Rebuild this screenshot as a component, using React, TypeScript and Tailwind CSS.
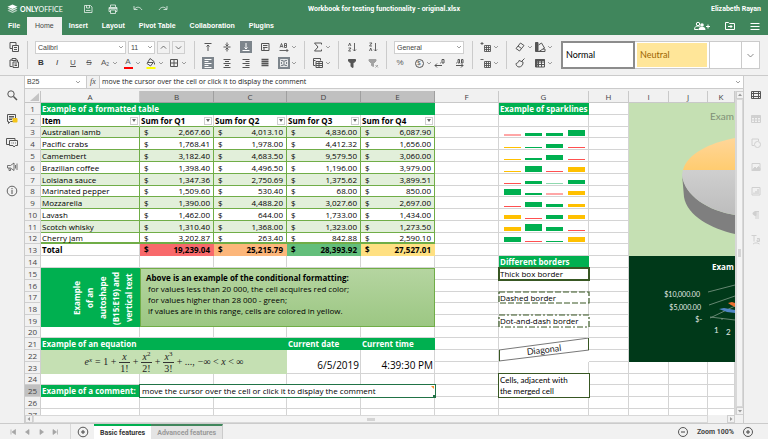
import React from "react";

type Kids = { children?: React.ReactNode };

const ui = "font-['Liberation_Sans',Arial,sans-serif]";

/* ---------- small building blocks ---------- */

function Icon({ children, className = "size-3", box = "0 0 12 12" }: Kids & { className?: string; box?: string }) {
  return (
    <svg viewBox={box} className={className} fill="none" stroke="currentColor" strokeWidth="1" aria-hidden="true">
      {children}
    </svg>
  );
}

function Chevron() {
  return (
    <svg viewBox="0 0 6 6" className="size-[6px] shrink-0" fill="none" stroke="#888" strokeWidth="0.8" aria-hidden="true">
      <path d="M1 2l2 2 2-2" />
    </svg>
  );
}

function Tool({ label, children, active = false, menu = false }: Kids & { label: string; active?: boolean; menu?: boolean }) {
  return (
    <button type="button" aria-label={label} className="flex h-3 shrink-0 items-center gap-px">
      <span className={`flex size-3 items-center justify-center ${active ? "bg-[#7d858c] text-white" : "text-[#555]"}`}>{children}</span>
      {menu && <Chevron />}
    </button>
  );
}

function Group({ children }: Kids) {
  return <div className="flex flex-col gap-1">{children}</div>;
}

function Line({ children, wide = false }: Kids & { wide?: boolean }) {
  return <div className={`flex h-3 items-center ${wide ? "gap-[7px]" : "gap-1"}`}>{children}</div>;
}

function Divider() {
  return <div className="w-px self-stretch bg-[#cbcbcb]" />;
}

function Picker({ label, value, className }: { label: string; value: string; className: string }) {
  return (
    <div className={`relative flex h-[13px] items-center border border-[#cfcfcf] bg-white ${className}`}>
      <select
        aria-label={label}
        className="h-full w-full appearance-none pl-[2px] text-[7px] leading-[11px] text-[#444] outline-none"
        defaultValue={value}
      >
        <option>{value}</option>
      </select>
      <span className="pointer-events-none absolute right-px">
        <Chevron />
      </span>
    </div>
  );
}

/* ---------- title bar and tabs ---------- */

const tabs = ["File", "Home", "Insert", "Layout", "Pivot Table", "Collaboration", "Plugins"];

function Header() {
  return (
    <header className="bg-[#40865c] text-white">
      <div className="grid h-[17px] grid-cols-[1fr_auto_1fr] items-center px-[7px]">
        <div className="flex items-center">
          <svg viewBox="0 0 11 10" className="mr-[2px] h-[10px] w-[11px]" fill="#fff" aria-hidden="true">
            <path d="M5.500 0.500L10.500 2.800 5.500 5 0.500 2.800z" />
            <path d="M0.500 4.500l1.500-.6 3.500 1.600L9 3.900l1.500.6-5 2.400z" opacity=".85" />
            <path d="M0.500 6.700l1.500-.6 3.500 1.600L9 6.100l1.500.6-5 2.400z" opacity=".65" />
          </svg>
          <span className="w-[62px] font-[Lato,sans-serif] text-[7px] leading-[10px]">
            <b>ONLY</b>OFFICE
          </span>
          <div className="flex items-center gap-[13px] text-white/70">
            <button type="button" aria-label="Save">
              <Icon>
                <path d="M2.500 2.500h6l1.500 1.500v5.500h-7.500zM4.500 2.500v2.500h3v-2.500M4 7.500h4.500" />
              </Icon>
            </button>
            <button type="button" aria-label="Print">
              <Icon>
                <path d="M3.500 4v-2h5v2M3.500 8.500h-1.500v-4h8v4h-1.500M3.500 7h5v3.500h-5z" />
                <path d="M2 5.500h8" strokeWidth="1.500" />
              </Icon>
            </button>
            <button type="button" aria-label="Undo">
              <Icon>
                <path d="M2 3v3.500h3.500M2.500 6c2-2.500 5.500-2.500 7.500 1" />
              </Icon>
            </button>
            <button type="button" aria-label="Redo">
              <Icon>
                <path d="M10 3v3.500h-3.500M9.500 6c-2-2.500-5.500-2.500-7.500 1" />
              </Icon>
            </button>
          </div>
        </div>
        <h1 className="font-[Roboto,sans-serif] text-[7px] leading-[10px] font-bold">Workbook for testing functionality - original.xlsx</h1>
        <div className="text-right font-[Roboto,sans-serif] text-[7px] leading-[10px] font-bold">Elizabeth Rayan</div>
      </div>
      <div className="flex h-[18px] items-stretch">
        <nav className="flex pl-px">
          {tabs.map((t) => (
            <button
              key={t}
              type="button"
              className={`text-[7px] leading-[10px] ${t === "Home" ? "bg-[#f1f1f1] px-[8px] text-[#444]" : "px-[7px] font-bold"}`}
            >
              {t}
            </button>
          ))}
        </nav>
        <div className="ml-auto flex items-center gap-[13px] pr-[7px]">
          <button type="button" aria-label="Share">
            <Icon box="0 0 18 12" className="h-3 w-[18px]">
              <circle cx="5" cy="4" r="1.700" />
              <path d="M1.500 9.500c0-3 2-3.500 3.500-3.500s2 .3 2.500 1M1.500 9.500h4" />
              <circle cx="9" cy="5" r="1.800" fill="currentColor" stroke="none" />
              <path d="M5.500 10c0-2.500 1.500-3 3.500-3s3.500.5 3.500 3z" fill="currentColor" stroke="none" />
              <path d="M15 4.500v4M13 6.500h4" />
            </Icon>
          </button>
          <button type="button" aria-label="Open folder">
            <Icon>
              <path d="M1.500 2.500h3l1 1h5v6h-9zM4 6.500h4M6.500 5l1.500 1.500-1.500 1.500" />
            </Icon>
          </button>
          <button type="button" aria-label="Settings">
            <Icon>
              <path d="M1.500 3.500h9M1.500 6.500h9M1.500 9.500h9" />
            </Icon>
          </button>
        </div>
      </div>
    </header>
  );
}

/* ---------- toolbar ---------- */

const grid = "M2.500 2.500h7v7h-7zM6 2.500v7M2.500 6h7";

function Toolbar() {
  return (
    <div className="flex items-center gap-[7px] border-b border-[#cbcbcb] bg-[#f1f1f1] px-2 py-[6px]">
      <Group>
        <Tool label="Copy">
          <Icon>
            <path d="M2 1.500h6v6h-6z" />
            <path d="M4.500 4.500h6v6h-6zM6 6.500h3M6 8.500h3" fill="#f1f1f1" />
          </Icon>
        </Tool>
        <Tool label="Paste">
          <Icon>
            <path d="M4 3h-2v6.500h2.500M8 3h1.500v2M4 1.500h4v2h-4z" />
            <path d="M5 5h5.500v5.500h-5.500zM6.500 7h2.500M6.500 8.500h2.500" />
          </Icon>
        </Tool>
      </Group>
      <Divider />
      <Group>
        <div className="flex h-3 items-center gap-[2px]">
          <Picker label="Font" value="Calibri" className="w-[91px]" />
          <Picker label="Font size" value="11" className="w-[27px]" />
          <button type="button" aria-label="Increase font size" className="flex h-[13px] w-[13px] items-center justify-center border border-[#cfcfcf]">
            <Icon className="size-[9px] text-[#444]">
              <path d="M2.500 7.500l3.500-3.500 3.500 3.500" />
            </Icon>
          </button>
          <button type="button" aria-label="Decrease font size" className="flex h-[13px] w-[13px] items-center justify-center border border-[#cfcfcf]">
            <Icon className="size-[9px] text-[#444]">
              <path d="M2.500 4.500l3.500 3.500 3.500-3.500" />
            </Icon>
          </button>
        </div>
        <Line>
          <Tool label="Bold">
            <b className="text-[8px] leading-3 text-[#333]">B</b>
          </Tool>
          <Tool label="Italic">
            <i className="text-[8px] leading-3 text-[#333]">I</i>
          </Tool>
          <Tool label="Underline">
            <u className="text-[8px] leading-3">U</u>
          </Tool>
          <Tool label="Strikeout">
            <s className="text-[8px] leading-3">S</s>
          </Tool>
          <Tool label="Subscript" menu>
            <span className="text-[8px] leading-3">
              A<sub className="text-[5px]">2</sub>
            </span>
          </Tool>
          <Tool label="Font color" menu>
            <span className="flex h-3 w-[9px] items-start justify-center border-b-2 border-[#f00] text-[8px] leading-[10px]">A</span>
          </Tool>
          <Tool label="Fill color" menu>
            <Icon>
              <path d="M5 1.500l4 3-3.500 4.500-3.500-2.500zM3 5.500h5M9.500 5.500v2" />
              <path d="M1.500 11h9" stroke="#ff0" strokeWidth="2" />
            </Icon>
          </Tool>
          <Tool label="Borders" menu>
            <Icon>
              <path d={grid} />
            </Icon>
          </Tool>
        </Line>
      </Group>
      <Divider />
      <Group>
        <Line wide>
          <Tool label="Align top">
            <Icon>
              <path d="M2.500 2.500h7M6 10v-6M4.500 5.500l1.500-1.500 1.500 1.500" />
            </Icon>
          </Tool>
          <Tool label="Align middle">
            <Icon>
              <path d="M2.500 6h7M6 1.500v3.500M6 10.500v-3.500M4.500 3.500l1.500 1.500 1.500-1.500M4.500 8.500l1.500-1.500 1.500 1.500" />
            </Icon>
          </Tool>
          <Tool label="Align bottom" active>
            <Icon>
              <path d="M2.500 9.500h7M6 2v6M4.500 6.500l1.500 1.500 1.500-1.500" />
            </Icon>
          </Tool>
          <Tool label="Wrap text">
            <Icon>
              <path d="M2.500 2.500h7.500v7h-7.500zM4 4.500h4.500M4 6.500h4.500M4 8h2" />
            </Icon>
          </Tool>
          <Tool label="Orientation" menu>
            <Icon>
              <path d="M1.500 9.500h8.500M8.500 8l1.500 1.500-1.500 1.500M2 6.500l1.500-4 1.500 4M2.500 5.500h2M6.500 2.500v4h2v-4zM6.500 4.500h2" strokeWidth="0.900" />
            </Icon>
          </Tool>
        </Line>
        <Line wide>
          <Tool label="Align left" active>
            <Icon>
              <path d="M2.500 2.500h7M2.500 4.500h4M2.500 6.500h7M2.500 8.500h4M2.500 10.500h7" />
            </Icon>
          </Tool>
          <Tool label="Align center">
            <Icon>
              <path d="M2.500 2.500h7M4 4.500h4M2.500 6.500h7M4 8.500h4M2.500 10.500h7" />
            </Icon>
          </Tool>
          <Tool label="Align right">
            <Icon>
              <path d="M2.500 2.500h7M5.500 4.500h4M2.500 6.500h7M5.500 8.500h4M2.500 10.500h7" />
            </Icon>
          </Tool>
          <Tool label="Justified">
            <Icon>
              <path d="M2.500 2.500h7M2.500 4.500h7M2.500 6.500h7M2.500 8.500h7" strokeWidth="1.300" />
            </Icon>
          </Tool>
          <Tool label="Merge cells" active menu>
            <Icon>
              <path d="M2.500 2.500h7v7h-7zM2.500 4.500h2v3h-2M9.500 4.500h-2v3h2M6 2.500v2M6 7.500v2M4.500 6h3" strokeWidth="0.800" />
            </Icon>
          </Tool>
        </Line>
      </Group>
      <Divider />
      <Group>
        <Tool label="Summation" menu>
          <Icon>
            <path d="M9.500 3.500v-1.500h-7l3.500 4-3.500 4h7v-1.500" />
          </Icon>
        </Tool>
        <Tool label="Named ranges" menu>
          <Icon>
            <path d="M8.500 3.500v-2h-7v7h2M1.500 3.500h2" />
            <path d="M4 4.500h6.500v6h-6.500zM4 6.500h6.500M4 8.500h6.500M7 4.500v6" />
          </Icon>
        </Tool>
      </Group>
      <Divider />
      <Group>
        <div className="flex h-3 items-center gap-[9px]">
          <Tool label="Sort ascending">
            <Icon>
              <path d="M8.500 2v8M7 8.500l1.500 1.500 1.500-1.500M2.500 5l1.200-3 1.200 3M2.500 7h2.500l-2.500 3h2.500" strokeWidth="0.900" />
            </Icon>
          </Tool>
          <Tool label="Sort descending">
            <Icon>
              <path d="M8.500 2v8M7 8.500l1.500 1.500 1.500-1.500M2.500 2h2.500l-2.500 3h2.500M2.500 10l1.200-3 1.200 3" strokeWidth="0.900" />
            </Icon>
          </Tool>
        </div>
        <div className="flex h-3 items-center gap-[9px]">
          <Tool label="Filter">
            <Icon>
              <path d="M2.500 2.500h7v1.500l-2.500 2.500v4l-2-1v-3l-2.500-2.500z" fill="currentColor" />
            </Icon>
          </Tool>
          <Tool label="Clear filter">
            <span className="opacity-50">
              <Icon>
                <path d="M2 2.500h7v1.500l-2.500 2.500v3l-2-1v-2l-2.500-2.500z" fill="currentColor" />
                <path d="M8.500 8l2.500 2.500M11 8l-2.500 2.500" />
              </Icon>
            </span>
          </Tool>
        </div>
      </Group>
      <Divider />
      <Group>
        <div className="flex h-3 items-center">
          <Picker label="Number format" value="General" className="w-[70px]" />
        </div>
        <Line wide>
          <Tool label="Percent style">
            <span className="text-[8px] leading-3">%</span>
          </Tool>
          <Tool label="Accounting style" menu>
            <span className="flex size-[9px] items-center justify-center rounded-full border border-[#555] text-[6px] leading-[7px]">$</span>
          </Tool>
          <div className="-ml-[5px] flex gap-[7px]">
            <Tool label="Decrease decimal">
              <Icon>
                <path d="M1 8.500h7M3 6.500l-2 2 2 2M8 2.500h2v3.500h-2zM6 6h.8" />
              </Icon>
            </Tool>
            <Tool label="Increase decimal">
              <Icon>
                <path d="M3 8.500h7M8 6.500l2 2-2 2M5 2.500h1.500v3.500h-1.500zM8.500 2.500h1.500v3.500h-1.500zM3 6h.8" />
              </Icon>
            </Tool>
          </div>
        </Line>
      </Group>
      <Divider />
      <Group>
        <Tool label="Insert cells" menu>
          <Icon>
            <path d="M4.500 4.500h6v6h-6zM4.500 6.500h6M4.500 8.500h6M6.500 4.500v6M8.500 4.500v6M0.500 2.500h3M2 1v3" strokeWidth="0.900" />
          </Icon>
        </Tool>
        <Tool label="Delete cells" menu>
          <Icon>
            <path d="M4.500 4.500h6v6h-6zM4.500 6.500h6M4.500 8.500h6M6.500 4.500v6M8.500 4.500v6M0.500 2.500h3" strokeWidth="0.900" />
          </Icon>
        </Tool>
      </Group>
      <Divider />
      <Group>
        <div className="flex h-3 items-center gap-px">
          <Tool label="Clear" menu>
            <Icon>
              <path d="M6.500 2l3.500 2.500-4.500 5.500-3.500-2.500zM4 5l3.500 2.500" />
            </Icon>
          </Tool>
          <Tool label="Color scheme" menu>
            <Icon>
              <path d="M1.500 1.500h2.500v9h-2.500z" fill="currentColor" />
              <path d="M4.500 4l3-2 3 5-5.500 3.500M4 10.500h7v-2.500h-2" />
            </Icon>
          </Tool>
        </div>
        <div className="flex h-3 items-center gap-2">
          <Tool label="Copy style">
            <Icon>
              <path d="M10.500 1.500l-3 3M5 3.500l4 1.500c.5 3-2 5-4 5-2 0-3-2-3-3.500 1 0 2.500-1 3-3z" />
            </Icon>
          </Tool>
          <Tool label="Format as table" menu>
            <Icon>
              <path d="M1.500 2.500h9v7.500h-9zM1.500 5h9M1.500 7.500h9M4.500 2.500v7.500M7.500 2.500v7.500" />
              <path d="M1.500 3h9M2.500 3v7" strokeWidth="2" />
            </Icon>
          </Tool>
        </div>
      </Group>
      <div className="ml-px flex min-w-0 flex-1 self-stretch border border-[#cbcbcb] bg-white font-[Lato,sans-serif] text-[9px] leading-3">
        <button type="button" className="-m-px w-[74px] border-2 border-[#8c8c8c] pl-[3px] text-left text-black">
          Normal
        </button>
        <button type="button" className="m-px ml-[3px] w-[70px] bg-[#ffe699] pl-[3px] text-left text-[#9c6500]">
          Neutral
        </button>
        <div className="ml-px flex-1 border-l border-[#cbcbcb]" />
        <button type="button" aria-label="More styles" className="flex w-[18px] items-center justify-center border-l border-[#cbcbcb] text-[#666]">
          <Icon className="size-[9px]">
            <path d="M2 4l4 4 4-4" />
          </Icon>
        </button>
      </div>
    </div>
  );
}

/* ---------- formula bar ---------- */

function FormulaBar() {
  return (
    <div className="flex h-[13px] items-stretch border-b border-[#cbcbcb] bg-white text-[7px] leading-[12px] text-[#444]">
      <div className="flex w-[61px] items-center">
        <input aria-label="Cell name" className="w-[50px] pl-[2px] outline-none" defaultValue="B25" />
        <Chevron />
      </div>
      <button
        type="button"
        aria-label="Insert function"
        className="w-[14px] border-x border-[#cbcbcb] bg-[#f1f1f1] font-['Liberation_Serif',serif] text-[8px] italic"
      >
        fx
      </button>
      <input
        aria-label="Formula"
        className="min-w-0 flex-1 pl-[2px] font-['Open_Sans',sans-serif] text-[#222] outline-none"
        defaultValue="move the cursor over the cell or click it to display the comment"
      />
      <span className="flex items-center pr-[2px]">
        <Chevron />
      </span>
    </div>
  );
}

/* ---------- sheet data ---------- */

const items: [string, string[]][] = [
  ["Australian lamb", ["2,667.60", "4,013.10", "4,836.00", "6,087.90"]],
  ["Pacific crabs", ["1,768.41", "1,978.00", "4,412.32", "1,656.00"]],
  ["Camembert", ["3,182.40", "4,683.50", "9,579.50", "3,060.00"]],
  ["Brazilian coffee", ["1,398.40", "4,496.50", "1,196.00", "3,979.00"]],
  ["Loisiana sauce", ["1,347.36", "2,750.69", "1,375.62", "3,899.51"]],
  ["Marinated pepper", ["1,509.60", "530.40", "68.00", "850.00"]],
  ["Mozzarella", ["1,390.00", "4,488.20", "3,027.60", "2,697.00"]],
  ["Lavash", ["1,462.00", "644.00", "1,733.00", "1,434.00"]],
  ["Scotch whisky", ["1,310.40", "1,368.00", "1,323.00", "1,273.50"]],
  ["Cherry jam", ["3,202.87", "263.40", "842.88", "2,590.10"]],
];

const totals: [string, string][] = [
  ["19,239.04", "bg-[#f8696b]"],
  ["25,215.79", "bg-[#fcb67a]"],
  ["28,393.92", "bg-[#63be7b]"],
  ["27,527.01", "bg-[#ffe082]"],
];

const G = "#00b050";
const Y = "#ffc000";
const R = "#ff5050";
const sparks: [number, string][][] = [
  [[2, "#ffa6a6"], [3, G], [3, G], [6, G]],
  [[1, Y], [1, G], [4, G], [1, R]],
  [[1, Y], [2, G], [5, G], [1, R]],
  [[1, Y], [6, G], [1, R], [5, Y]],
  [[1, R], [3, G], [1, "#8fd9ae"], [4, G]],
  [[6, G], [2, G], [2, "#ffa6a6"], [4, Y]],
  [[1, R], [5, G], [3, G], [3, Y]],
  [[4, Y], [1, R], [4, G], [4, Y]],
  [[4, Y], [7, G], [4, G], [1, R]],
  [[5, G], [1, R], [1, G], [5, Y]],
];

function Sparkline({ bars }: { bars: [number, string][] }) {
  return (
    <svg viewBox="0 0 89 10" className="block h-[10px] w-[89px]" shapeRendering="crispEdges" aria-hidden="true">
      {bars.map(([h, c], i) => (
        <rect key={i} x={[5, 26, 47, 69][i]} y={9 - h} width="17" height={h} fill={c} />
      ))}
    </svg>
  );
}

function PieChart() {
  return (
    <svg viewBox="0 0 106 152" className="block h-[152px] w-[106px]" role="img" aria-label="Pie chart">
      <defs>
        <linearGradient id="amber" x1="0" y1="0" x2="0" y2="1">
          <stop offset="0" stopColor="#ffd699" />
          <stop offset="1" stopColor="#ffcc70" />
        </linearGradient>
        <linearGradient id="silver" x1="0" y1="0" x2="0" y2="1">
          <stop offset="0" stopColor="#cfcfcf" />
          <stop offset="1" stopColor="#bdbdbd" />
        </linearGradient>
      </defs>
      <text x="81" y="17" className="font-[Lato,sans-serif] text-[10px]" fill="#7f8f77">
        Exam
      </text>
      <path d="M54 67C58 51 80 40 106 35V67z" fill="url(#amber)" />
      <path d="M53 71C55 93 80 108 106 112V131C83 126 58 113 55 94z" fill="#7f7f7f" />
      <path d="M54 67H106V112C80 108 55 93 53 72z" fill="url(#silver)" />
    </svg>
  );
}

function LineChart() {
  return (
    <svg viewBox="0 0 106 105" className="block h-[105px] w-[106px]" role="img" aria-label="Line chart">
      <g className="font-[Lato,sans-serif]" fill="#e6ece8">
        <text x="83" y="14" className="font-['Open_Sans',sans-serif] text-[8px] font-bold" fill="#fff">
          Exam
        </text>
        <g className="text-[7px]" textAnchor="end">
          <text x="71" y="41">$10,000.00</text>
          <text x="72" y="54">$5,000.00</text>
          <text x="73" y="66">$-</text>
        </g>
        <g className="text-[8px]">
          <text x="85" y="77">1</text>
          <text x="97" y="79">2</text>
        </g>
      </g>
      <path d="M79 36L106 29M80 49L106 40M81 62L106 50M81 61L106 64M93 62v2" stroke="#7f9a88" strokeWidth="0.800" />
      <path d="M90 53l5-1 11 2v3l-8-1z" fill="#4f86c6" />
      <path d="M99 47l4-1 3 1v4l-4-2z" fill="#ed7031" />
    </svg>
  );
}

function Frac({ top, sup, bottom }: { top: string; sup?: string; bottom: string }) {
  return (
    <span className="flex flex-col items-center">
      <span className="h-[10px] px-px leading-[10px] italic">
        {top}
        {sup && <sup className="-top-[4px] text-[7px] not-italic">{sup}</sup>}
      </span>
      <span className="h-[11px] border-t border-[#333] px-px leading-[11px]">{bottom}</span>
    </span>
  );
}

function Equation() {
  return (
    <div className="flex h-[22px] items-center justify-center gap-[3px] font-['Liberation_Serif',serif] text-[10px] text-[#222]">
      <span className="italic">
        e<sup className="text-[7px]">x</sup>
      </span>
      <span>= 1 +</span>
      <Frac top="x" bottom="1!" />
      <span>+</span>
      <Frac top="x" sup="2" bottom="2!" />
      <span>+</span>
      <Frac top="x" sup="3" bottom="3!" />
      <span>+ ...,</span>
      <span>
        −∞ &lt; <i>x</i> &lt; ∞
      </span>
    </div>
  );
}

/* ---------- sheet ---------- */

const line = "border-r border-b border-[#d4d4d4]";
const title = "bg-[#00b050] pl-px text-left font-bold text-white";
const shortRows = [3, 8, 12, 17, 20, 24];

function Blank({ n = 1 }: { n?: number }) {
  return (
    <>
      {Array.from({ length: n }, (_, i) => (
        <td key={i} className={line} />
      ))}
    </>
  );
}

function leftCells(r: number) {
  if (r === 1)
    return (
      <th colSpan={5} className={title}>
        Example of a formatted table
      </th>
    );
  if (r === 2)
    return ["Item", "Sum for Q1", "Sum for Q2", "Sum for Q3", "Sum for Q4"].map((h) => (
      <th key={h} className="border-r border-b border-r-[#d4d4d4] border-b-[#70ad47] pl-px text-left font-bold">
        <span className="flex items-center justify-between">
          {h}
          <button type="button" aria-label={`Filter ${h}`} className="mr-px flex size-[8px] items-center justify-center border border-[#cfcfcf] bg-white">
            <svg viewBox="0 0 4 3" className="h-[3px] w-[4px]" fill="#666" aria-hidden="true">
              <path d="M0 0h4l-2 3z" />
            </svg>
          </button>
        </span>
      </th>
    ));
  if (r >= 3 && r <= 12) {
    const [name, values] = items[r - 3];
    const cell = `border-r border-b border-[#70ad47] ${r % 2 ? "bg-[#e2efda]" : "bg-white"} ${r === 12 ? "shadow-[inset_0_-1px_0_#70ad47]" : ""}`;
    return (
      <>
        <td className={`${cell} pl-px`}>{name}</td>
        {values.map((v, i) => (
          <td key={i} className={`${cell} pr-[3px] pl-[4px]`}>
            <span className="flex justify-between">
              <span>$</span>
              <span>{v}</span>
            </span>
          </td>
        ))}
      </>
    );
  }
  if (r === 13)
    return (
      <>
        <th className={`${line} pl-px text-left font-bold`}>Total</th>
        {totals.map(([v, c]) => (
          <td key={v} className={`px-[4px] font-bold ${c}`}>
            <span className="flex justify-between">
              <span>$</span>
              <span>{v}</span>
            </span>
          </td>
        ))}
      </>
    );
  if (r === 15)
    return (
      <>
        <td rowSpan={5} className="bg-[#00b050] font-bold text-white">
          <div className="ml-auto mr-[3px] h-[58px] w-[67px] rotate-180 text-center leading-[13px] [writing-mode:vertical-rl]">
            Example
            <br />
            of an
            <br />
            autoshape
            <br />
            (B15:E19) and
            <br />
            vertical text
          </div>
        </td>
        <td rowSpan={5} colSpan={4} className="border border-[#70ad47] bg-linear-to-b from-[#b5d5a0] to-[#9cc783] pt-[3px] pl-[5px] align-top leading-[11px]">
          <b>Above is an example of the conditional formatting:</b>
          <div className="pl-[2px]">
            <p>for values less than 20 000, the cell acquires red color;</p>
            <p>for values higher than 28 000 - green;</p>
            <p>if values are in this range, cells are colored in yellow.</p>
          </div>
        </td>
      </>
    );
  if (r > 15 && r < 20) return null;
  if (r === 21)
    return (
      <>
        <th colSpan={3} className={title}>
          Example of an equation
        </th>
        <th className={title}>Current date</th>
        <th className={title}>Current time</th>
      </>
    );
  if (r === 22)
    return (
      <>
        <td rowSpan={2} colSpan={3} className="bg-[#c5e0b3]">
          <Equation />
        </td>
        {["6/5/2019", "4:39:30 PM"].map((v) => (
          <td key={v} rowSpan={2} className={`${line} pr-px text-right align-bottom text-[10px] leading-[15px]`}>
            {v}
          </td>
        ))}
      </>
    );
  if (r === 23) return null;
  if (r === 25)
    return (
      <>
        <th className={title}>Example of a comment:</th>
        <td colSpan={4} className="relative bg-white pl-[2px] outline outline-[#217346]">
          move the cursor over the cell or click it to display the comment
          <span className="absolute top-px right-px size-0 border-t-3 border-l-3 border-t-[#f28c28] border-l-transparent" />
          <span className="absolute -right-px -bottom-px size-[3px] bg-[#217346]" />
        </td>
      </>
    );
  return <Blank n={5} />;
}

function gCell(r: number) {
  if (r === 1) return <th className={title}>Example of sparklines</th>;
  if (r >= 3 && r <= 12)
    return (
      <td className={line}>
        <Sparkline bars={sparks[r - 3]} />
      </td>
    );
  if (r === 14) return <th className={title}>Different borders</th>;
  if (r === 15) return <td className="pl-px outline-2 -outline-offset-1 outline-[#385723]">Thick box border</td>;
  if (r === 17 || r === 19)
    return (
      <td className="relative pl-px">
        {r === 17 ? "Dashed border" : "Dot-and-dash border"}
        <svg className="absolute inset-0 size-full overflow-visible" fill="none" stroke="#385723" aria-hidden="true">
          <rect width="100%" height="100%" strokeWidth="1.200" strokeDasharray={r === 17 ? "6 2" : "6 2 2 2"} />
        </svg>
      </td>
    );
  if (r === 21)
    return (
      <td rowSpan={2}>
        <svg viewBox="0 0 90 24" className="block h-[24px] w-[90px]" role="img" aria-label="Diagonal">
          <path d="M0 12L90 0M0 23L90 12" stroke="#555" strokeWidth="0.800" />
          <path d="M0.500 12v11M89.500 0v12" stroke="#385723" />
          <text x="45" y="15" textAnchor="middle" transform="rotate(-7 45 12)" className="font-[Lato,sans-serif] text-[9px]" fill="#222">
            Diagonal
          </text>
        </svg>
      </td>
    );
  if (r === 22 || r === 25) return null;
  if (r === 24)
    return (
      <td rowSpan={2} className="pl-px font-[Lato,sans-serif] leading-[11px] outline outline-[#385723]">
        Cells, adjacent with
        <br />
        the merged cell
      </td>
    );
  return <Blank />;
}

function chartCells(r: number) {
  if (r === 1)
    return (
      <td rowSpan={13} colSpan={3} className="bg-[#c5e0b3] align-top">
        <PieChart />
      </td>
    );
  if (r === 14)
    return (
      <td rowSpan={9} colSpan={3} className="bg-[#003919] align-top">
        <LineChart />
      </td>
    );
  if (r < 23) return null;
  return <Blank n={3} />;
}

const columns = ["A", "B", "C", "D", "E", "F", "G", "H", "I", "J", "K"];

function Sheet() {
  return (
    <div className="min-w-0 flex-1 overflow-hidden bg-white">
      <table className="w-full table-fixed border-separate border-spacing-0 font-['Open_Sans',sans-serif] text-[8px] leading-[10px] whitespace-nowrap text-black">
        <colgroup>
          <col className="w-[16px]" />
          <col className="w-[99px]" />
          <col className="w-[74px]" />
          <col className="w-[73px]" />
          <col className="w-[74px]" />
          <col className="w-[74px]" />
          <col className="w-[64px]" />
          <col className="w-[90px]" />
          <col className="w-[40px]" />
          <col className="w-[40px]" />
          <col className="w-[39px]" />
          <col />
        </colgroup>
        <thead>
          <tr className="h-3 text-[#444]">
            <td className="border-r border-b border-[#c4c4c4] bg-[#f1f1f1]">
              <svg viewBox="0 0 14 10" className="ml-auto h-[10px] w-[14px]" fill="#c4c4c4" aria-hidden="true">
                <path d="M13 1v8H4z" />
              </svg>
            </td>
            {columns.map((c) => (
              <th
                key={c}
                className={`border-r border-b text-center font-normal ${"BCDE".includes(c) ? "border-[#9f9f9f] bg-[#c0c0c0]" : "border-[#c9c9c9] bg-[#f1f1f1]"}`}
              >
                {c}
              </th>
            ))}
          </tr>
        </thead>
        <tbody>
          {Array.from({ length: 27 }, (_, i) => i + 1).map((r) => (
            <tr key={r} className={shortRows.includes(r) ? "h-[11px]" : "h-3"}>
              <th className={`border-r border-b border-[#cfcfcf] text-center font-normal text-[#444] ${r === 25 ? "bg-[#c0c0c0]" : "bg-[#f1f1f1]"}`}>{r}</th>
              {leftCells(r)}
              <Blank />
              {gCell(r)}
              <Blank />
              {chartCells(r)}
            </tr>
          ))}
        </tbody>
      </table>
    </div>
  );
}

function Arrow({ d, label }: { d: string; label: string }) {
  return (
    <button type="button" aria-label={label} className="flex size-[8px] shrink-0 items-center justify-center border border-[#cfcfcf] bg-[#f1f1f1]">
      <svg viewBox="0 0 4 4" className="size-[4px]" fill="#999" aria-hidden="true">
        <path d={d} />
      </svg>
    </button>
  );
}

/* ---------- side panels ---------- */

function LeftPanel() {
  return (
    <aside className="flex w-[25px] shrink-0 flex-col items-center gap-3 border-r border-[#cbcbcb] pt-[13px] text-[#555]">
      <button type="button" aria-label="Search">
        <Icon>
          <circle cx="5" cy="5" r="3.200" />
          <path d="M7.500 7.500l3.500 3.500" strokeWidth="1.500" />
        </Icon>
      </button>
      <button type="button" aria-label="Comments">
        <Icon>
          <path d="M1.500 1.500h8v7h-5l-2 2v-2h-1zM3 3.500h5M3 5h5M3 6.500h3" />
          <rect x="6.500" y="5" width="5" height="4.500" rx="1" fill="#f5c518" stroke="none" />
        </Icon>
      </button>
      <button type="button" aria-label="Chat">
        <Icon>
          <path d="M3 7.500h-2.500v-6h8.500v2M3.500 3.500h8v5h-2l-1.500 1.500-1-1.500h-3.500zM5.500 6h.8M7.200 6h.8M9 6h.8" />
        </Icon>
      </button>
      <button type="button" aria-label="Feedback">
        <Icon>
          <path d="M1.500 4.500h3l3.500-2.500v7.500l-3.500-2.500h-3zM3 7v2.500h1.500v-2M9.500 4v3.500M11 2.500v6.500" strokeWidth="0.800" />
        </Icon>
      </button>
      <button type="button" aria-label="About">
        <Icon>
          <circle cx="6" cy="6" r="4.800" strokeWidth="0.900" />
          <path d="M6 3v1.200M6 5v4" />
        </Icon>
      </button>
    </aside>
  );
}

function RightPanel() {
  return (
    <aside className="flex w-[25px] shrink-0 flex-col items-center gap-3 border-l border-[#cbcbcb] pt-[13px] text-[#d0d0d0]">
      <button type="button" aria-label="Cell settings" className="text-[#555]">
        <Icon>
          <path d="M1.500 2.500h9v7h-9zM1.500 4.500h9M1.500 7.500h9M3.500 2.500v7M8.500 2.500v7" />
        </Icon>
      </button>
      <button type="button" aria-label="Table settings">
        <Icon>
          <path d="M1.500 2.500h9v7h-9zM1.500 4.500h9M1.500 7h9M4.500 2.500v7M7.500 2.500v7" />
          <path d="M1.500 3.200h9" strokeWidth="1.500" />
        </Icon>
      </button>
      <button type="button" aria-label="Shape settings">
        <Icon>
          <path d="M4 8.500h-2v-6.500h6.500v2" />
          <circle cx="7.500" cy="7.500" r="3" />
        </Icon>
      </button>
      <button type="button" aria-label="Image settings">
        <Icon>
          <path d="M2 2.500h8v7h-8z" />
          <path d="M2 9.500l3-3.500 1.500 1.500 2-2 1.500 2v2z" fill="currentColor" />
        </Icon>
      </button>
      <button type="button" aria-label="Chart settings">
        <Icon>
          <path d="M2 2.500h8v7.500h-8z" />
          <path d="M4 9v-1.500M6 9v-3M8 9v-5" strokeWidth="1.300" />
        </Icon>
      </button>
      <button type="button" aria-label="Paragraph settings">
        <Icon>
          <path d="M6 2.500v7.500M8 2.500v7.500M9 2.500h-4" />
          <path d="M6 2.500c-4 0-4 4 0 4z" fill="currentColor" />
        </Icon>
      </button>
      <button type="button" aria-label="Text art settings">
        <Icon>
          <path d="M1.500 2.500h5M4 2.500v6M7 5.500h2.500v3h-2.500v-1.500h2.500M3 11c2-1.500 4-1.500 6.500 0" />
        </Icon>
      </button>
    </aside>
  );
}

/* ---------- status bar ---------- */

function StatusBar() {
  return (
    <footer className="flex h-[16px] shrink-0 items-stretch border-t border-[#cbcbcb] bg-[#f1f1f1] font-[Roboto,sans-serif] text-[7px] leading-[10px] text-[#444]">
      <div className="flex w-[71px] items-center gap-[2px] border-r border-[#d8d8d8] pl-[7px] text-[#a5a5a5]">
        {[
          ["First sheet", "M4 3.500v5M8.500 3.500v5l-3.500-2.500z"],
          ["Previous sheet", "M8 3.500v5l-3.500-2.500z"],
          ["Next sheet", "M5 3.500v5l3.500-2.500z"],
          ["Last sheet", "M8.500 3.500v5M4 3.500v5l3.500-2.500z"],
        ].map(([label, d]) => (
          <button key={label} type="button" aria-label={label}>
            <Icon>
              <path d={d} fill="currentColor" strokeWidth="0.700" />
            </Icon>
          </button>
        ))}
      </div>
      <button type="button" aria-label="Add sheet" className="flex w-[23px] items-center justify-center">
        <Icon>
          <circle cx="6" cy="6" r="4.800" strokeWidth="0.900" />
          <path d="M6 4v4M4 6h4" />
        </Icon>
      </button>
      <button type="button" className="border-t-2 border-[#00b050] bg-white px-[6px] font-bold text-[#333]">
        Basic features
      </button>
      <button type="button" className="border-t-2 border-r border-t-[#40865c] border-r-[#cbcbcb] bg-[#e4e4e4] px-[6px] font-bold text-[#999]">
        Advanced features
      </button>
      <div className="ml-auto flex items-center gap-[8px] pr-[14px] font-bold">
        <button type="button" aria-label="Zoom out">
          <Icon>
            <circle cx="6" cy="6" r="4.500" strokeWidth="0.900" />
            <path d="M4 6h4" />
          </Icon>
        </button>
        <span>Zoom 100%</span>
        <button type="button" aria-label="Zoom in">
          <Icon>
            <circle cx="6" cy="6" r="4.500" strokeWidth="0.900" />
            <path d="M6 4v4M4 6h4" />
          </Icon>
        </button>
      </div>
    </footer>
  );
}

export default function App() {
  return (
    <div className={`flex h-screen flex-col overflow-hidden bg-[#f1f1f1] ${ui}`}>
      <Header />
      <Toolbar />
      <div className="flex min-h-0 flex-1">
        <LeftPanel />
        <main className="flex min-w-0 flex-1 flex-col">
          <FormulaBar />
          <div className="mt-[2px] flex min-h-0 flex-1">
            <Sheet />
            <div className="flex w-[8px] shrink-0 flex-col border-l border-[#d8d8d8]">
              <Arrow label="Scroll up" d="M0 3h4l-2-2.500z" />
              <div className="flex flex-1 items-center justify-center border border-[#d8d8d8] bg-[#f4f4f4]">
                <span className="h-[8px] w-[3px] bg-[#d4d4d4]" />
              </div>
              <Arrow label="Scroll down" d="M0 1h4l-2 2.500z" />
            </div>
          </div>
          <div className="flex h-[8px] shrink-0 pr-[8px]">
            <Arrow label="Scroll left" d="M3 0v4l-2.500-2z" />
            <div className="flex flex-1 items-center justify-center border border-[#d8d8d8] bg-[#f4f4f4]">
              <span className="h-[3px] w-[8px] bg-[#d4d4d4]" />
            </div>
            <div className="w-[19px]" />
            <Arrow label="Scroll right" d="M1 0v4l2.500-2z" />
          </div>
        </main>
        <RightPanel />
      </div>
      <StatusBar />
    </div>
  );
}
